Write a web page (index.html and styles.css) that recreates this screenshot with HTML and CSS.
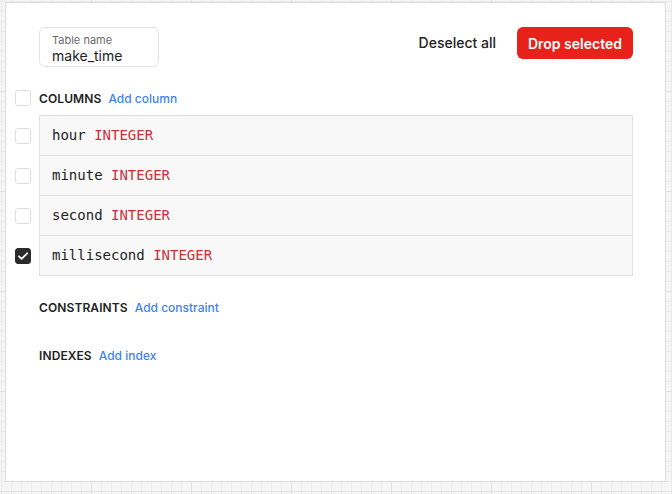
FILE: index.html
```html
<!DOCTYPE html>
<html>
<head>
<meta charset="utf-8">
<link rel="stylesheet" href="styles.css">
</head>
<body>
<div class="panel">
  <div class="topbar">
    <div class="name-field">
      <div class="name-label">Table name</div>
      <div class="name-value">make_time</div>
    </div>
    <div class="actions">
      <span class="deselect">Deselect all</span>
      <button class="drop">Drop selected</button>
    </div>
  </div>

  <div class="grid">
    <span class="cb head"></span>
    <div class="section head"><span class="title">COLUMNS</span><span class="link">Add column</span></div>

    <span class="cb row-cb"></span>
    <div class="cell"><span class="col">hour</span> <span class="type">INTEGER</span></div>
    <span class="cb row-cb"></span>
    <div class="cell"><span class="col">minute</span> <span class="type">INTEGER</span></div>
    <span class="cb row-cb"></span>
    <div class="cell"><span class="col">second</span> <span class="type">INTEGER</span></div>
    <span class="cb row-cb checked"><svg viewBox="0 0 16 16" width="16" height="16"><path d="M4 8.3l2.6 2.6L12.2 5.3" fill="none" stroke="#fff" stroke-width="1.8" stroke-linecap="round" stroke-linejoin="round"/></svg></span>
    <div class="cell last"><span class="col">millisecond</span> <span class="type">INTEGER</span></div>

    <span></span>
    <div class="section sec-first"><span class="title">CONSTRAINTS</span><span class="link">Add constraint</span></div>
    <span></span>
    <div class="section sec-gap"><span class="title">INDEXES</span><span class="link">Add index</span></div>
  </div>
</div>
</body>
</html>
```
FILE: styles.css
```css
html, body {
  margin: 0;
  padding: 0;
}
body {
  width: 672px;
  height: 494px;
  overflow: hidden;
  background-color: #f6f6f6;
  background-image:
    linear-gradient(to right, #e2e2e2 1px, transparent 1px),
    linear-gradient(to bottom, #e2e2e2 1px, transparent 1px),
    linear-gradient(to right, #ebebeb 1px, transparent 1px),
    linear-gradient(to bottom, #ebebeb 1px, transparent 1px);
  background-size: 100px 100px, 100px 100px, 10px 10px, 10px 10px;
  background-position: 91px 91px, 91px 91px, 1px 1px, 1px 1px;
  font-family: Inter, "Noto Sans", sans-serif;
  color: #222;
}
.panel {
  box-sizing: border-box;
  margin: 2px 0 0 5px;
  width: 661px;
  height: 480px;
  background: #fff;
  border: 1px solid #dcdcdc;
  padding: 24px 32px 0 9px;
}
.topbar {
  display: flex;
  justify-content: space-between;
  align-items: flex-start;
  padding-left: 24px;
}
.name-field {
  box-sizing: border-box;
  width: 120px;
  height: 40px;
  border: 1px solid #e3e3e3;
  border-radius: 6px;
  padding: 5px 12px 1px;
}
.name-label {
  font-size: 11px;
  line-height: 14px;
  color: #6b6b6b;
}
.name-value {
  font-size: 14px;
  line-height: 18px;
  color: #1c1c1c;
}
.actions {
  display: flex;
  align-items: center;
  gap: 21px;
}
.deselect {
  font-size: 14px;
  font-weight: 500;
  color: #222;
  line-height: 32px;
}
.drop {
  height: 32px;
  width: 116px;
  border: none;
  border-radius: 6px;
  background: #e8211b;
  color: #fff;
  font-family: Inter, "Noto Sans", sans-serif;
  font-size: 14px;
  font-weight: 600;
  padding: 0;
}
.grid {
  display: grid;
  grid-template-columns: 16px 594px;
  column-gap: 8px;
  align-items: center;
  margin-top: 23px;
}
.cb {
  box-sizing: border-box;
  width: 16px;
  height: 16px;
  border: 1px solid #dedede;
  border-radius: 3px;
  background: #fff;
  display: block;
}
.cb.head, .section.head {
  margin-bottom: 9px;
}
.cb.checked {
  background: #2b2b2b;
  border-color: #2b2b2b;
}
.cb svg {
  display: block;
  margin: -1px;
}
.row-cb {
  margin-top: 1px;
}
.section {
  display: flex;
  align-items: center;
  gap: 7px;
  height: 16px;
  font-size: 12px;
}
.title {
  font-weight: 600;
  color: #222;
  letter-spacing: 0.1px;
}
.link {
  color: #3e82f2;
  font-weight: 500;
}
.sec-first {
  margin-top: 23px;
}
.sec-gap {
  margin-top: 32px;
}
.cell {
  box-sizing: border-box;
  height: 40px;
  background: #f8f8f8;
  border: 1px solid #e0e0e0;
  border-bottom: none;
  padding: 0 12px;
  font-family: "DejaVu Sans Mono", monospace;
  font-size: 14px;
  line-height: 39px;
  white-space: pre;
}
.cell.last {
  height: 41px;
  border-bottom: 1px solid #e0e0e0;
}
.col {
  color: #222;
}
.type {
  color: #c8303c;
}
```
